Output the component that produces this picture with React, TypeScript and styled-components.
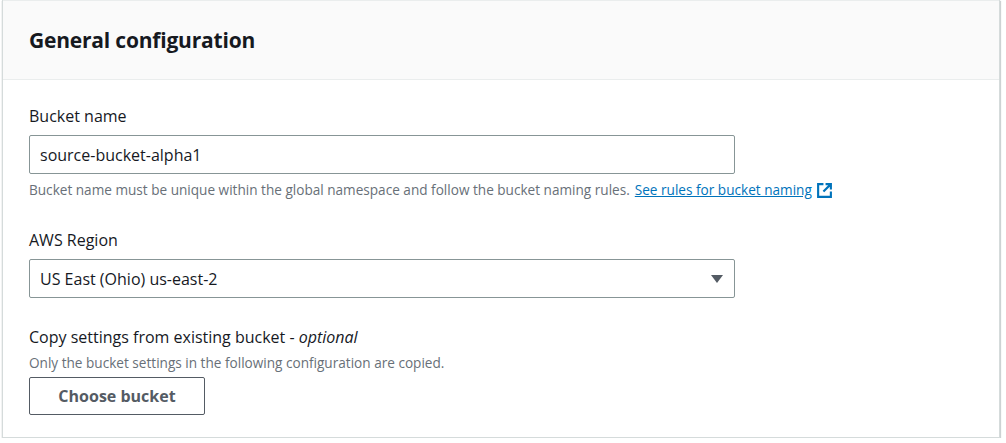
import React from "react";
import styled, { createGlobalStyle } from "styled-components";

const Global = createGlobalStyle`
  html, body { margin: 0; padding: 0; background: #fff; }
  body { font-family: "Open Sans", "Noto Sans", Arial, sans-serif; color: #16191f; }
`;

const Card = styled.div`
  margin: 0 6px 0 2px;
  height: 438px;
  box-sizing: border-box;
  border: 1px solid #d5dbdb;
  border-top: none;
  box-shadow: 0 1px 1px 0 rgba(0,28,36,0.3), 1px 1px 1px 0 rgba(0,28,36,0.15);
  background: #fff;
`;

const Header = styled.div`
  height: 80px;
  box-sizing: border-box;
  background: #fafafa;
  border-bottom: 1px solid #eaeded;
  border-top: 1px solid #eaeded;
  padding: 0 0 0 26px;
  display: flex;
  align-items: center;
`;

const Title = styled.h2`
  margin: 0;
  font-size: 21px;
  font-weight: 700;
  letter-spacing: -0.2px;
`;

const Body = styled.div`
  padding: 25px 26px 0;
  display: flex;
  flex-direction: column;
`;

const Field = styled.div<{ gap?: number }>`
  display: flex;
  flex-direction: column;
  margin-bottom: ${(p) => p.gap ?? 0}px;
`;

const Label = styled.div`
  font-size: 16px;
  line-height: 22px;
  margin-bottom: 8px;
`;

const Input = styled.div`
  width: 706px;
  height: 39px;
  box-sizing: border-box;
  border: 1px solid #879596;
  border-radius: 2px;
  padding: 0 10px;
  display: flex;
  align-items: center;
  justify-content: space-between;
  font-size: 16px;
`;

const Hint = styled.div<{ top?: number }>`
  font-size: 13.6px;
  line-height: 20px;
  color: #687078;
  margin-top: ${(p) => p.top ?? 6}px;
  display: flex;
  align-items: center;
`;

const Link = styled.a`
  color: #0073bb;
  text-decoration: underline;
  margin-left: 5px;
  display: inline-flex;
  align-items: center;
  gap: 4px;
`;

const Italic = styled.i``;

const Button = styled.button`
  margin-top: 4px;
  width: 176px;
  height: 38px;
  border: 1px solid #545b64;
  border-radius: 2px;
  background: #fff;
  font-family: inherit;
  font-size: 16px;
  font-weight: 700;
  color: #545b64;
`;

export default function App() {
  return (
    <>
      <Global />
      <Card>
        <Header><Title>General configuration</Title></Header>
        <Body>
          <Field gap={29}>
            <Label>Bucket name</Label>
            <Input>source-bucket-alpha1</Input>
            <Hint>
              Bucket name must be unique within the global namespace and follow the bucket naming rules.
              <Link>
                See rules for bucket naming
                <svg width="17" height="17" viewBox="0 0 16 16" fill="none" stroke="#0073bb" strokeWidth="2">
                  <path d="M7 2H2v12h12V9" />
                  <path d="M9 2h5v5M14 2L7 9" />
                </svg>
              </Link>
            </Hint>
          </Field>
          <Field gap={28}>
            <Label>AWS Region</Label>
            <Input>
              US East (Ohio) us-east-2
              <svg width="14" height="10" viewBox="0 0 14 10"><path d="M1 1h12L7 9z" fill="#545b64" /></svg>
            </Input>
          </Field>
          <Field>
            <Label style={{ marginBottom: 0 }}>Copy settings from existing bucket - <Italic>optional</Italic></Label>
            <Hint top={5}>Only the bucket settings in the following configuration are copied.</Hint>
            <Button>Choose bucket</Button>
          </Field>
        </Body>
      </Card>
    </>
  );
}
